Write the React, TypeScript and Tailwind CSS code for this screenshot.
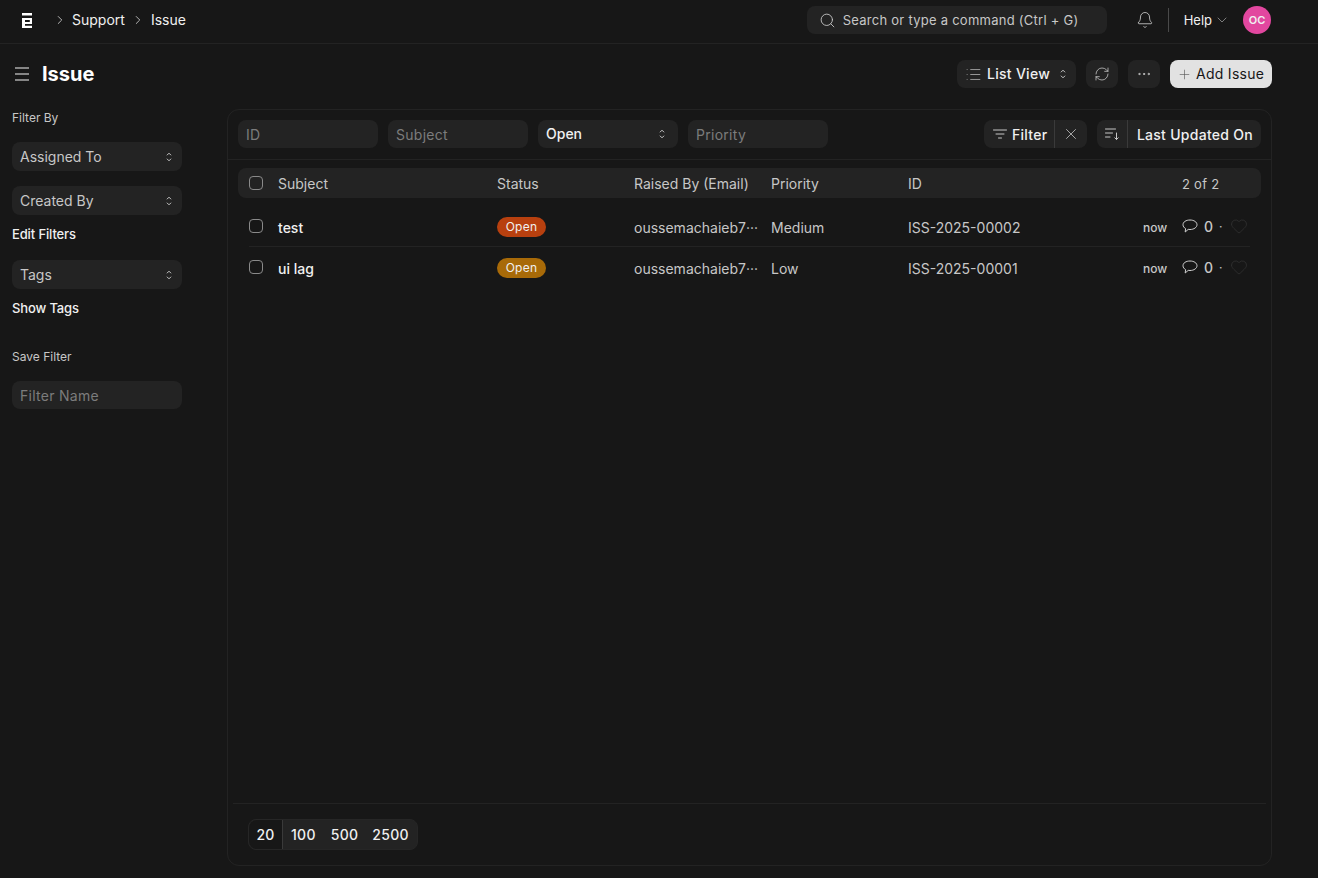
import { Bell, ChevronDown, ChevronRight, Heart, List, MoreHorizontal, Plus, RefreshCw, Search, X } from "lucide-react";

const rows = [
  { subject: "test", badge: "bg-[#b8400f]", priority: "Medium", id: "ISS-2025-00002", height: "h-[41px] border-b border-[#232323]" },
  { subject: "ui lag", badge: "bg-[#a86a08]", priority: "Low", id: "ISS-2025-00001", height: "h-[40px]" },
];

const Updown = () => (
  <svg width="10" height="12" viewBox="0 0 10 12" fill="none" stroke="#c7c7c7" strokeWidth="1" strokeLinecap="round" strokeLinejoin="round">
    <path d="M3.2 4 5 2.2 6.8 4M3.2 8 5 9.8 6.8 8" />
  </svg>
);

const SortIcon = () => (
  <svg width="16" height="16" viewBox="0 0 16 16" fill="none" stroke="#c7c7c7" strokeWidth="1" strokeLinecap="round">
    <path d="M1.5 3h10M1.5 7h7M1.5 11h4.5M12.5 7v6.5M10.8 11.8l1.7 1.7 1.7-1.7" />
  </svg>
);

const FilterIcon = () => (
  <svg width="14" height="10" viewBox="0 0 14 10" fill="none" stroke="#c7c7c7" strokeWidth="1" strokeLinecap="round">
    <path d="M.5 1h13M3 5h8M5.5 9h3" />
  </svg>
);

const Hamburger = () => (
  <svg width="14" height="14" viewBox="0 0 14 14" fill="none" stroke="#ababab" strokeWidth="1.5">
    <path d="M0 1h14M0 7h14M0 13h14" />
  </svg>
);

const Bubble = () => (
  <svg width="16" height="14" viewBox="0 0 16 14" fill="none" stroke="#d0d0d0" strokeWidth="1" strokeLinejoin="round">
    <path d="M8 1C4.1 1 1 2.9 1 5.7c0 1.7 1 3 2.6 3.9L3.2 13l3-2.6c.6.1 1.2.1 1.8.1 3.900 0 7-2.100 7-4.800S11.900 1 8 1z" />
  </svg>
);

const Logo = () => (
  <svg width="10" height="15" viewBox="0 0 10 15" fill="#fff" fillRule="evenodd">
    <path d="M0 0h10v2.400H0zM0 5h10v6H3v1.700h7V15H0zM3 7v2h4.800V7z" />
  </svg>
);

const SideSelect = ({ label }: { label: string }) => (
  <div className="flex h-[29px] items-center justify-between rounded-lg bg-[#232323] pl-2 pr-2 text-sm text-[#c7c7c7]">
    {label}
    <Updown />
  </div>
);

const App = () => {
  return (
    <div className="flex h-[878px] flex-col overflow-hidden bg-[#171717] font-['Inter',sans-serif] text-[#f0f0f0]">
      {/* Top bar */}
      <header className="flex h-11 shrink-0 items-center border-b border-[#232323] pb-[3px] pl-[22px] pr-[47px]">
        <Logo />
        <ChevronRight size={14} strokeWidth={1.5} className="ml-[21px] text-[#c7c7c7]" />
        <span className="ml-[5px] text-sm">Support</span>
        <ChevronRight size={14} strokeWidth={1.5} className="ml-[6px] text-[#c7c7c7]" />
        <span className="ml-[6px] text-sm">Issue</span>
        <div className="ml-auto flex h-7 w-[300px] items-center rounded-lg bg-[#232323] pl-3 text-[13px] tracking-[0.02em] text-[#c7c7c7]">
          <Search size={17} strokeWidth={1.25} />
          <span className="ml-[7px] mt-[2px]">Search or type a command (Ctrl + G)</span>
        </div>
        <Bell size={18} strokeWidth={1.1} className="ml-[29px] text-[#d0d0d0]" />
        <div className="ml-[14px] h-6 w-px bg-[#4a4a4a]" />
        <span className="ml-[15px] mt-[2px] text-[13px]">Help</span>
        <ChevronDown size={16} strokeWidth={1} className="ml-[2px] text-[#b0b0b0]" />
        <div className="ml-[13px] flex h-7 w-7 items-center justify-center rounded-full bg-[#e2479f] text-[11px] font-semibold">OC</div>
      </header>

      {/* Page head */}
      <div className="flex h-[60px] shrink-0 items-center pl-[15px] pr-[46px]">
        <Hamburger />
        <h1 className="ml-[13px] text-xl font-bold text-white">Issue</h1>
        <div className="ml-auto flex h-7 w-[119px] items-center rounded-lg bg-[#232323] pl-2 text-sm font-medium tracking-[0.02em]">
          <List size={17} strokeWidth={1} className="text-[#c7c7c7]" />
          <span className="ml-[5px]">List View</span>
          <span className="ml-2"><Updown /></span>
        </div>
        <div className="ml-2.5 flex h-7 w-8 items-center justify-center rounded-lg bg-[#232323]">
          <RefreshCw size={16} strokeWidth={1.1} className="text-[#d0d0d0]" />
        </div>
        <div className="ml-2.5 flex h-7 w-8 items-center justify-center rounded-lg bg-[#232323]">
          <MoreHorizontal size={16} strokeWidth={1.25} className="text-[#d0d0d0]" />
        </div>
        <div className="ml-2.5 flex h-7 w-[102px] items-center rounded-lg bg-[#e2e2e2] pl-[7px] text-sm tracking-[0.02em] text-[#171717]">
          <Plus size={15} strokeWidth={1} className="text-[#555]" />
          <span className="ml-[4px]">Add Issue</span>
        </div>
      </div>

      <div className="flex min-h-0 flex-1 pb-3 pl-3 pr-[46px] pt-[5px]">
        {/* Sidebar */}
        <aside className="w-[170px] shrink-0">
          <div className="text-xs leading-[18px] text-[#c7c7c7]">Filter By</div>
          <div className="mt-[15px] flex flex-col gap-[15px]">
            <SideSelect label="Assigned To" />
            <SideSelect label="Created By" />
          </div>
          <div className="mt-[10px] text-[13px] font-medium leading-[18px] tracking-[-0.01em]">Edit Filters</div>
          <div className="mt-[17px]">
            <SideSelect label="Tags" />
          </div>
          <div className="mt-[10px] text-[13px] font-medium leading-[18px] tracking-[-0.01em]">Show Tags</div>
          <div className="mt-[31px] text-xs leading-[18px] text-[#c7c7c7]">Save Filter</div>
          <div className="mt-[15px] flex h-7 items-center rounded-lg bg-[#232323] pl-2 pt-[2px] text-sm tracking-[0.02em] text-[#7c7c7c]">Filter Name</div>
        </aside>

        {/* List card */}
        <main className="ml-[45px] flex min-w-0 flex-1 flex-col rounded-xl border border-[#232323]">
          <div className="flex h-[50px] shrink-0 items-center gap-2.5 border-b border-[#232323] px-2.5 pb-[2px]">
            <div className="flex h-7 w-[140px] items-center rounded-lg bg-[#232323] pl-2 pt-[2px] text-sm tracking-[0.02em] text-[#7c7c7c]">ID</div>
            <div className="flex h-7 w-[140px] items-center rounded-lg bg-[#232323] pl-2 pt-[2px] text-sm tracking-[0.02em] text-[#7c7c7c]">Subject</div>
            <div className="flex h-7 w-[140px] items-center justify-between rounded-lg bg-[#232323] pl-2 pr-[11px] text-sm font-medium">
              Open
              <Updown />
            </div>
            <div className="flex h-7 w-[140px] items-center rounded-lg bg-[#232323] pl-2 pt-[2px] text-sm tracking-[0.02em] text-[#7c7c7c]">Priority</div>
            <div className="ml-auto flex h-7 items-center rounded-lg bg-[#232323] text-sm font-medium tracking-[0.02em]">
              <div className="flex h-full w-[71px] items-center gap-[5px] border-r border-[#3a3a3a] pl-[9px]">
                <FilterIcon />
                <span className="mt-[2px]">Filter</span>
              </div>
              <div className="flex w-8 items-center justify-center">
                <X size={18} strokeWidth={1} className="text-[#d0d0d0]" />
              </div>
            </div>
            <div className="flex h-7 items-center rounded-lg bg-[#232323] text-sm font-medium tracking-[0.02em]">
              <div className="flex h-full w-[31px] items-center justify-center border-r border-[#3a3a3a]">
                <SortIcon />
              </div>
              <span className="mt-[2px] pl-[9px] pr-2">Last Updated On</span>
            </div>
          </div>

          <div className="mx-2.5 mt-2 flex h-[30px] shrink-0 items-center rounded-lg bg-[#232323] pl-[11px] text-sm text-[#c7c7c7]">
            <div className="h-[14px] w-[14px] rounded-[4px] border border-[#8a8a8a]" />
            <span className="ml-[15px] mt-[2px] w-[219px]">Subject</span>
            <span className="mt-[2px] w-[137px]">Status</span>
            <span className="mt-[2px] w-[137px]">Raised By (Email)</span>
            <span className="mt-[2px] w-[137px]">Priority</span>
            <span className="mt-[2px] w-[274px]">ID</span>
            <span className="mt-[2px] text-[13px] tracking-[0.02em]">2 of 2</span>
          </div>

          <div className="mx-[21px] mt-2 flex flex-col">
            {rows.map((row) => (
              <div key={row.id} className={`flex items-center text-sm text-[#c7c7c7] ${row.height}`}>
                <div className="h-[14px] w-[14px] rounded-[4px] border border-[#8a8a8a]" />
                <span className="ml-[15px] mt-[4px] w-[219px] font-medium text-[#f0f0f0]">{row.subject}</span>
                <span className="mt-[2px] flex w-[137px]">
                  <span className={`inline-flex h-5 w-[49px] items-center justify-center rounded-full text-xs tracking-[0.02em] text-[#f0f0f0] ${row.badge}`}>Open</span>
                </span>
                <span className="mt-[4px] w-[137px]">oussemachaieb7···</span>
                <span className="mt-[4px] w-[137px]">{row.priority}</span>
                <span className="mt-[4px] w-[235px]">{row.id}</span>
                <span className="mt-[4px] w-[39px] text-xs font-medium">now</span>
                <Bubble />
                <span className="ml-[6px] mt-[2px] font-medium">0</span>
                <span className="ml-[6px] mt-[2px] text-xs">·</span>
                <Heart size={18} strokeWidth={1} className="ml-[7px] text-[#333333]" />
              </div>
            ))}
          </div>

          <div className="mx-[5px] mt-auto h-[62px] shrink-0 border-t border-[#232323] pl-[15px] pt-[15px]">
            <div className="flex h-[31px] w-[170px] items-center rounded-lg border border-[#262626] bg-[#232323] text-sm font-medium tracking-[0.02em]">
              <div className="flex h-full w-[34px] items-center justify-center rounded-l-lg border-r border-[#3a3a3a] bg-[#171717]">20</div>
              <span className="ml-2">100</span>
              <span className="ml-[15px]">500</span>
              <span className="ml-[14px]">2500</span>
            </div>
          </div>
        </main>
      </div>
    </div>
  );
};

export default App;
